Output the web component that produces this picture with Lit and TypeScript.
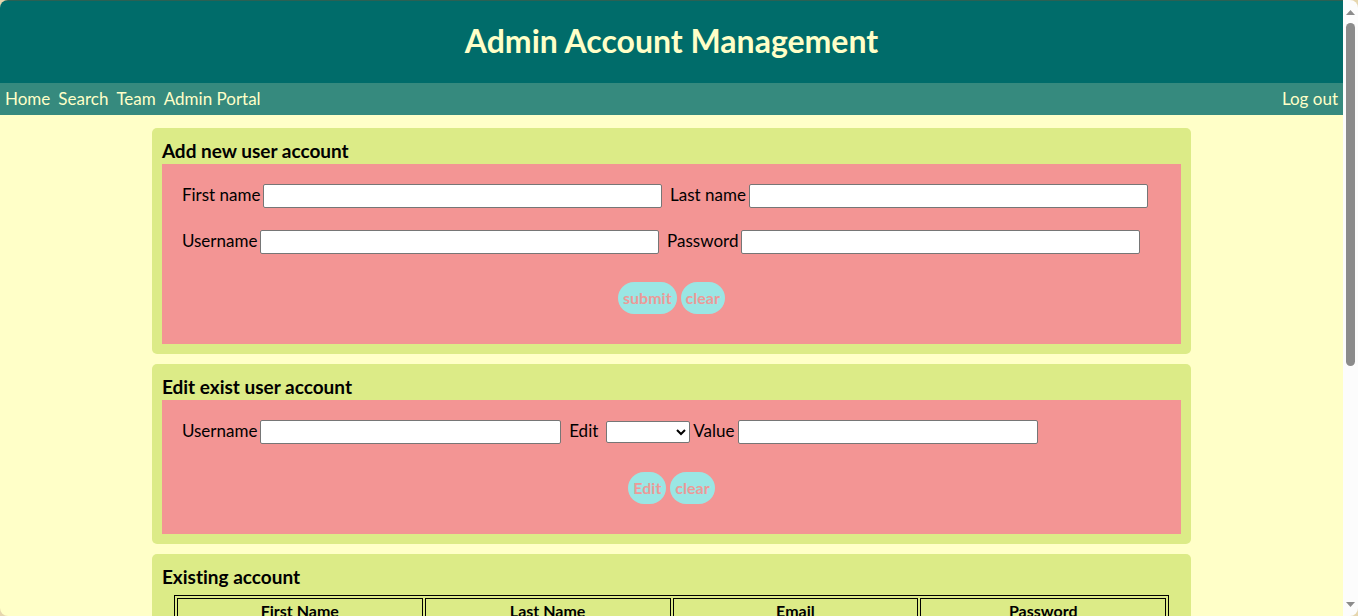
import { LitElement, html, css } from "lit";
import { customElement } from "lit/decorators.js";

@customElement("app-scrollbar")
export class AppScrollbar extends LitElement {
  static styles = css`
    :host {
      display: flex;
      flex-direction: column;
      align-items: center;
      justify-content: space-between;
      box-sizing: border-box;
      padding: 10px 0 9px;
      background: #fcfcfc;
    }
    .arrow {
      display: block;
      width: 9px;
      height: 5px;
      fill: #8b8b8b;
    }
    .track {
      flex: 1;
      width: 9px;
      margin: 8px 0;
    }
    .thumb {
      height: 60%;
      border-radius: 5px;
      background: #8b8b8b;
    }
  `;

  render() {
    return html`
      <svg class="arrow" viewBox="0 0 9 5"><path d="M4.5 0 9 5H0z" /></svg>
      <div class="track"><div class="thumb"></div></div>
      <svg class="arrow" viewBox="0 0 9 5"><path d="M0 0h9L4.5 5z" /></svg>
    `;
  }
}

@customElement("app-root")
export class AppRoot extends LitElement {
  static styles = css`
    :host {
      display: block;
      background: #e6d6ae;
      color: #000;
      font-family: Lato, "Open Sans", sans-serif;
      font-size: 16px;
      font-variant-ligatures: none;
      line-height: 22px;
    }
    .window {
      display: grid;
      grid-template-columns: minmax(0, 1fr) 15px;
      height: 100vh;
      border-radius: 8px;
      overflow: hidden;
    }
    .page {
      overflow-y: auto;
      scrollbar-width: none;
      background: #ffffc8;
    }
    .banner {
      padding: 18px 0 21px;
      border-top: 1px solid #2c6053;
      background: #006c6a;
      color: #ffffc8;
      text-align: center;
    }
    .banner h1 {
      margin: 0;
      font-size: 32px;
      line-height: 43px;
    }
    .nav {
      display: flex;
      gap: 8px;
      padding: 5px;
      background: #368a7e;
      font-size: 17px;
    }
    .nav a {
      color: #ffffc8;
      text-decoration: none;
    }
    .nav .end {
      margin-left: auto;
    }
    main {
      display: flex;
      flex-direction: column;
      gap: 10px;
      width: calc(75% + 32px);
      margin: 13px auto;
    }
    .card {
      padding: 10px;
      border-radius: 5px;
      background: #dceb87;
    }
    .card h2 {
      margin: 0;
      font-size: 19px;
      line-height: 26px;
    }
    form {
      display: flex;
      flex-direction: column;
      gap: 22px;
      padding: 20px 20px 30px;
      background: #f39594;
    }
    .row {
      display: flex;
      align-items: center;
      gap: 3px;
    }
    label {
      padding-bottom: 2px;
      font-size: 17px;
      white-space: nowrap;
    }
    input,
    select {
      box-sizing: border-box;
      border: 1px solid #767676;
      border-radius: 2px;
      background: #fff;
      font: inherit;
    }
    input {
      height: 24px;
      margin-right: 5px;
      padding: 0 4px;
    }
    .wide {
      width: calc(40% + 7px);
    }
    .medium {
      width: calc(30% + 7px);
    }
    select {
      width: 84px;
      height: 22px;
      margin-left: 5px;
    }
    .actions {
      display: flex;
      justify-content: center;
      gap: 4px;
      padding-top: 6px;
    }
    button {
      height: 32px;
      padding: 0 5px 1px;
      border: 0;
      border-radius: 16px;
      background: #9ae6e4;
      color: #ec9a98;
      font: inherit;
      font-weight: 700;
    }
    table {
      width: calc(100% - 24px);
      margin: 5px 12px 0;
      border: 1px solid #000;
      border-spacing: 2px;
      table-layout: fixed;
    }
    th,
    td {
      padding: 1px;
      border: 1px solid #000;
      text-align: center;
    }
    td {
      height: 22px;
    }
  `;

  private columns = ["First Name", "Last Name", "Email", "Password"];

  private field(id: string, label: string, size: string, type = "text") {
    return html`
      <label for=${id}>${label}</label>
      <input class=${size} id=${id} type=${type} />
    `;
  }

  render() {
    return html`
      <div class="window">
        <div class="page">
          <header class="banner"><h1>Admin Account Management</h1></header>
          <nav class="nav">
            <a href="#home">Home</a>
            <a href="#search">Search</a>
            <a href="#team">Team</a>
            <a href="#admin">Admin Portal</a>
            <a class="end" href="#logout">Log out</a>
          </nav>
          <main>
            <section class="card">
              <h2>Add new user account</h2>
              <form>
                <div class="row">
                  ${this.field("first", "First name", "wide")}
                  ${this.field("last", "Last name", "wide")}
                </div>
                <div class="row">
                  ${this.field("user", "Username", "wide")}
                  ${this.field("pass", "Password", "wide", "password")}
                </div>
                <div class="actions">
                  <button type="button">submit</button>
                  <button type="reset">clear</button>
                </div>
              </form>
            </section>
            <section class="card">
              <h2>Edit exist user account</h2>
              <form>
                <div class="row">
                  ${this.field("target", "Username", "medium")}
                  <label for="property">Edit</label>
                  <select id="property"><option></option></select>
                  ${this.field("value", "Value", "medium")}
                </div>
                <div class="actions">
                  <button type="button">Edit</button>
                  <button type="reset">clear</button>
                </div>
              </form>
            </section>
            <section class="card">
              <h2>Existing account</h2>
              <table>
                <thead>
                  <tr>${this.columns.map((name) => html`<th scope="col">${name}</th>`)}</tr>
                </thead>
                <tbody>
                  <tr>${this.columns.map(() => html`<td></td>`)}</tr>
                </tbody>
              </table>
            </section>
          </main>
        </div>
        <app-scrollbar></app-scrollbar>
      </div>
    `;
  }
}
